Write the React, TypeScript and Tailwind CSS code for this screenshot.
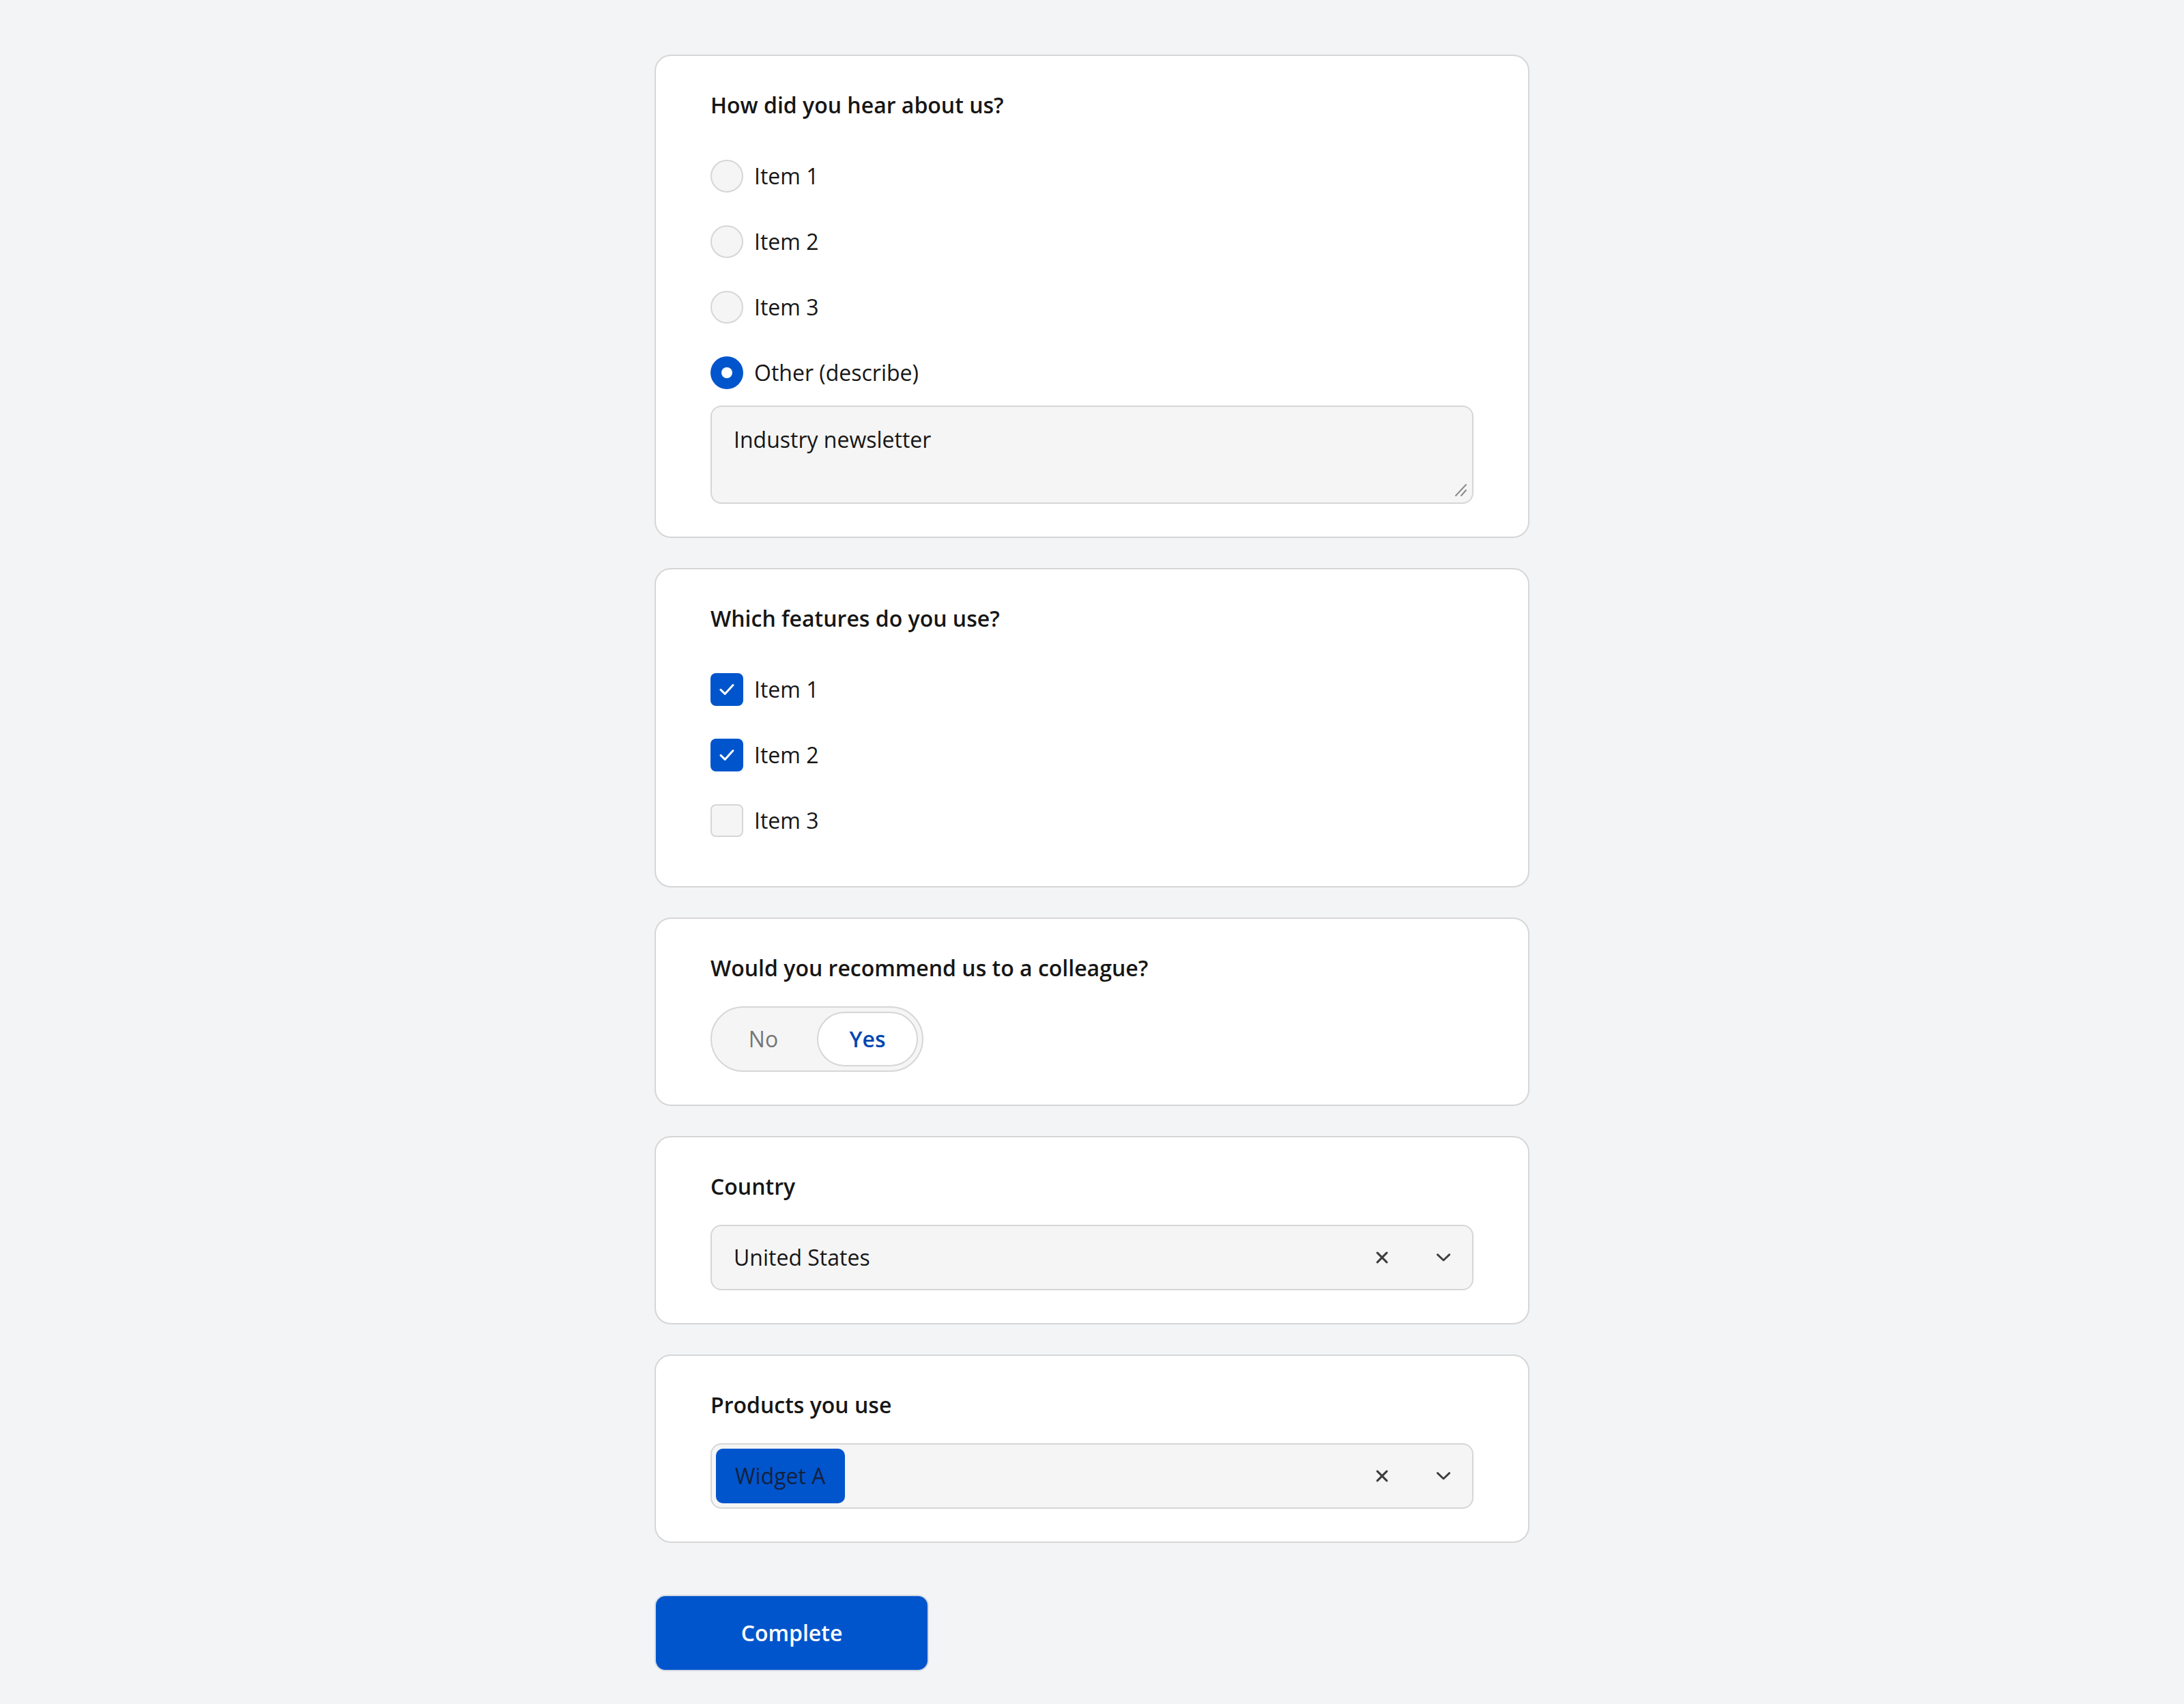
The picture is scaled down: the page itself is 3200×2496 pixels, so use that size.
import { useState } from "react";

const BLUE = "bg-[#0055cc]";

function Card({ title, children }: { title: string; children: React.ReactNode }) {
  return (
    <div className="rounded-[24px] border-2 border-[#d6d6d6] bg-white px-20 py-12">
      <div className="mb-8 text-[32px] leading-[48px] font-semibold text-[#161616]">{title}</div>
      {children}
    </div>
  );
}

function Radio({ label, checked }: { label: string; checked?: boolean }) {
  return (
    <div className="flex h-24 items-center gap-4">
      {checked ? (
        <span className={`flex h-12 w-12 items-center justify-center rounded-full ${BLUE}`}>
          <span className="h-4 w-4 rounded-full bg-white" />
        </span>
      ) : (
        <span className="h-12 w-12 rounded-full border-2 border-[#d6d6d6] bg-[#f5f5f5]" />
      )}
      <span className="text-[32px] leading-[48px] text-[#161616]">{label}</span>
    </div>
  );
}

function Checkbox({ label, checked }: { label: string; checked?: boolean }) {
  return (
    <div className="flex h-24 items-center gap-4">
      {checked ? (
        <span className={`flex h-12 w-12 items-center justify-center rounded-lg ${BLUE}`}>
          <svg width="28" height="28" viewBox="0 0 14 14" fill="none">
            <path d="M2.5 7.2 5.6 10.2 11.5 3.8" stroke="white" strokeWidth="1.5" strokeLinecap="round" strokeLinejoin="round" />
          </svg>
        </span>
      ) : (
        <span className="h-12 w-12 rounded-lg border-2 border-[#d6d6d6] bg-[#f5f5f5]" />
      )}
      <span className="text-[32px] leading-[48px] text-[#161616]">{label}</span>
    </div>
  );
}

function SelectIcons() {
  return (
    <div className="ml-auto flex items-center">
      <span className="flex h-12 w-12 items-center justify-center">
        <svg width="18" height="18" viewBox="0 0 10 10" fill="none">
          <path d="M1.2 1.2 8.8 8.8M8.8 1.2 1.2 8.8" stroke="#3d3d3d" strokeWidth="1.7" strokeLinecap="round" />
        </svg>
      </span>
      <span className="ml-[42px] mr-[18px] flex h-12 w-12 items-center justify-center">
        <svg width="22" height="14" viewBox="0 0 12 8" fill="none">
          <path d="M1 1.5 6 6.3 11 1.5" stroke="#3d3d3d" strokeWidth="1.6" strokeLinecap="round" strokeLinejoin="round" />
        </svg>
      </span>
    </div>
  );
}

export default function App() {
  const [text, setText] = useState("Industry newsletter");

  return (
    <div
      className="min-h-screen bg-[#f3f4f6] pt-20 pb-12"
      style={{ fontFamily: '"Open Sans", "Noto Sans", sans-serif' }}
    >
      <div className="mx-auto flex w-[1282px] flex-col gap-11">
        <Card title="How did you hear about us?">
          <Radio label="Item 1" />
          <Radio label="Item 2" />
          <Radio label="Item 3" />
          <Radio label="Other (describe)" checked />
          <div className="relative">
            <textarea
              value={text}
              onChange={(e) => setText(e.target.value)}
              className="block h-[144px] w-full resize-none rounded-2xl border-2 border-[#d6d6d6] bg-[#f5f5f5] px-8 pt-6 text-[32px] leading-[48px] text-[#161616] outline-none"
            />
            <svg className="pointer-events-none absolute right-[8px] bottom-[10px]" width="22" height="20" viewBox="0 0 22 20" fill="none">
              <path d="M4 18 19 2M12 18 19 10" stroke="#8a8a8a" strokeWidth="2" strokeLinecap="round" />
            </svg>
          </div>
        </Card>

        <Card title="Which features do you use?">
          <Checkbox label="Item 1" checked />
          <Checkbox label="Item 2" checked />
          <Checkbox label="Item 3" />
        </Card>

        <Card title="Would you recommend us to a colleague?">
          <div className="inline-flex rounded-full border-2 border-[#d6d6d6] bg-[#f5f5f5] p-[6px]">
            <span className="flex h-20 w-[148px] items-center justify-center rounded-full pr-[9px] text-[32px] text-[#757575]">
              No
            </span>
            <span className="flex h-20 w-[148px] items-center justify-center rounded-full border-2 border-[#d6d6d6] bg-white text-[32px] font-semibold text-[#0046b3]">
              Yes
            </span>
          </div>
        </Card>

        <Card title="Country">
          <div className="flex h-24 items-center rounded-2xl border-2 border-[#d6d6d6] bg-[#f5f5f5] pl-8">
            <span className="text-[32px] leading-[48px] text-[#161616]">United States</span>
            <SelectIcons />
          </div>
        </Card>

        <Card title="Products you use">
          <div className="flex h-24 items-center rounded-2xl border-2 border-[#d6d6d6] bg-[#f5f5f5] pl-[6px]">
            <span className={`flex h-20 items-center rounded-[10px] px-[28px] text-[32px] text-[#14213d] ${BLUE}`}>
              Widget A
            </span>
            <SelectIcons />
          </div>
        </Card>

        <div className="mt-8">
          <button className={`h-28 w-[402px] rounded-2xl border-2 border-[#d3d9e2] ${BLUE} text-[32px] font-semibold text-white`}>
            Complete
          </button>
        </div>
      </div>
    </div>
  );
}
